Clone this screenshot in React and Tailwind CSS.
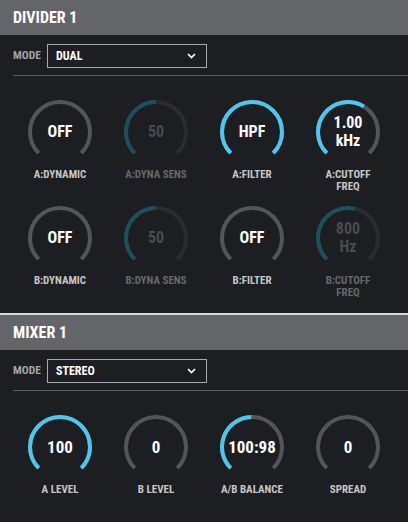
import React from 'react';

const FONT = { fontFamily: '"Roboto Condensed", Roboto, "Liberation Sans", sans-serif' };

// point on the knob ring, angle measured clockwise from 12 o'clock
const polar = (a, r = 30) => {
  const rad = (a * Math.PI) / 180;
  return [32 + r * Math.sin(rad), 32 - r * Math.cos(rad)];
};

const arcPath = (from, to) => {
  const [x1, y1] = polar(from);
  const [x2, y2] = polar(to);
  const large = to - from > 180 ? 1 : 0;
  return `M ${x1.toFixed(2)} ${y1.toFixed(2)} A 30 30 0 ${large} 1 ${x2.toFixed(2)} ${y2.toFixed(2)}`;
};

const Knob = ({ value, label, fill = 0, disabled = false, big = false }) => {
  const end = -135 + 270 * fill;
  const track = disabled ? '#2a2c30' : '#545558';
  const active = disabled ? '#1e4f5e' : '#4cc8f0';
  const lines = Array.isArray(value) ? value : [value];
  const labels = Array.isArray(label) ? label : [label];

  return (
    <div className="flex flex-col items-center">
      <div className="relative w-16 h-16">
        <svg width="64" height="64" viewBox="0 0 64 64">
          <path d={arcPath(-135, 135)} fill="none" stroke={track} strokeWidth="4" />
          {fill > 0 && <path d={arcPath(-135, end)} fill="none" stroke={active} strokeWidth="4" />}
        </svg>
        <div
          className={`absolute inset-0 flex flex-col items-center justify-center font-bold leading-[18px] ${big ? 'text-[17px]' : 'text-[16px]'} ${disabled ? 'text-[#4a4b4e]' : 'text-white'}`}
        >
          {lines.map((l) => (
            <span key={l}>{l}</span>
          ))}
        </div>
      </div>
      <div
        className={`mt-[5px] flex flex-col items-center font-bold text-[11px] leading-[12px] ${disabled ? 'text-[#67686b]' : 'text-[#c6c7c9]'}`}
      >
        {labels.map((l) => (
          <span key={l}>{l}</span>
        ))}
      </div>
    </div>
  );
};

const Header = ({ title }) => (
  <div className="h-[35px] bg-[#646569] flex items-center px-[13px]">
    <span className="text-white font-bold text-[16px]">{title}</span>
  </div>
);

const ModeRow = ({ mode }) => (
  <div className="pt-[9px]">
    <div className="flex items-center pl-[13px] pb-[7px]">
      <span className="text-[#a4a5a7] font-bold text-[11.5px] w-[34px]">MODE</span>
      <div className="w-[160px] h-[24px] border border-[#a9aaac] flex items-center justify-between pl-2 pr-[10px]">
        <span className="text-white font-bold text-[12px]">{mode}</span>
        <svg width="9" height="6" viewBox="0 0 9 6">
          <path d="M1 1 L4.5 4.5 L8 1" fill="none" stroke="#ffffff" strokeWidth="1.6" />
        </svg>
      </div>
    </div>
    <div className="ml-[13px] h-px bg-[#5c5d60]" />
  </div>
);

const App = () => {
  return (
    <div className="w-[408px] h-[522px] bg-[#1d1e21] overflow-hidden" style={FONT}>
      <Header title="DIVIDER 1" />
      <ModeRow mode="DUAL" />
      <div className="grid grid-cols-4 px-3 pt-6 pb-[14px] gap-y-[13px]">
        <Knob value="OFF" label="A:DYNAMIC" />
        <Knob value="50" label="A:DYNA SENS" fill={0.5} disabled />
        <Knob value="HPF" label="A:FILTER" fill={1} />
        <Knob value={['1.00', 'kHz']} label={['A:CUTOFF', 'FREQ']} fill={0.617} />
        <Knob value="OFF" label="B:DYNAMIC" />
        <Knob value="50" label="B:DYNA SENS" fill={0.5} disabled />
        <Knob value="OFF" label="B:FILTER" />
        <Knob value={['800', 'Hz']} label={['B:CUTOFF', 'FREQ']} fill={0.55} disabled />
      </div>
      <div className="h-[2px] bg-[#d9dadc]" />
      <Header title="MIXER 1" />
      <ModeRow mode="STEREO" />
      <div className="grid grid-cols-4 px-3 pt-6">
        <Knob value="100" label="A LEVEL" fill={1} big />
        <Knob value="0" label="B LEVEL" big />
        <Knob value="100:98" label="A/B BALANCE" fill={0.495} big />
        <Knob value="0" label="SPREAD" big />
      </div>
    </div>
  );
};

export default App;
